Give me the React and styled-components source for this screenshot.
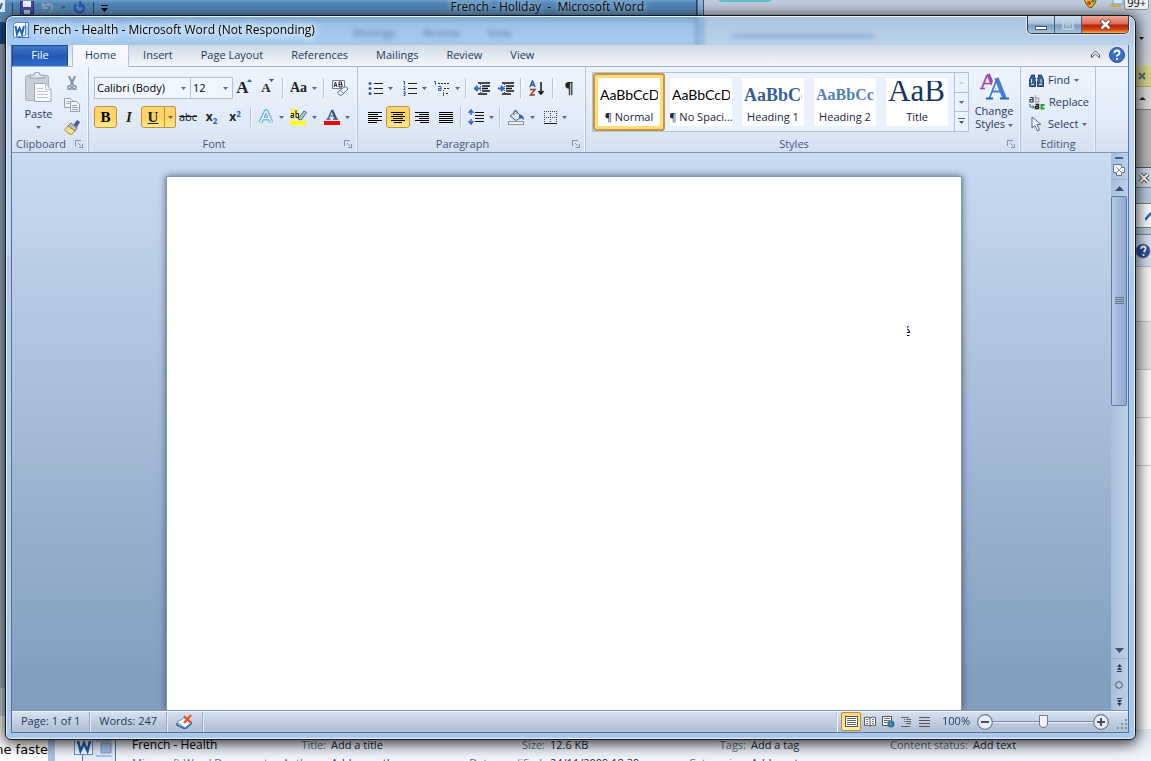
import React from 'react';
import styled, { createGlobalStyle, css } from 'styled-components';

const Global = createGlobalStyle`
  * { box-sizing: border-box; }
  html, body, #root { height: 100%; }
  body { margin: 0; overflow: hidden; background: #f4f6fa; }
  body, button, select, input { font: 11px/16px "Open Sans", "Noto Sans", sans-serif; color: #1e395b; }
  button, select { margin: 0; padding: 0; border: 0; background: none; }
`;

const Desktop = styled.div`position: relative; height: 100vh; overflow: hidden; background: #f7f8fb;`;

/* ---------- windows at the back ---------- */
const HolidayWindow = styled.section`
  position: absolute; left: 0; top: 0; bottom: 0; width: 697px;
  background: #a2b2c8; border-right: 1px solid #35485e;
`;
const HolidayBar = styled.header`
  height: 22px; display: flex; align-items: flex-start; overflow: hidden;
  background: linear-gradient(#6f9dc7, #4f86ba 4px, #5c90c0 11px, #6f9dc7 22px);
`;
const QuickTools = styled.div`display: flex; align-items: center; height: 15px; gap: 7px;`;
const QuickLine = styled.span`width: 1px; height: 12px; background: #2f4c6c;`;
const HolidayTitle = styled.span`
  margin-left: auto; padding: 0 8px; margin-right: 44px; font-size: 12px; line-height: 14px; color: #0a0a0a; white-space: pre;
  text-shadow: 0 0 6px #b9d6ef, 0 0 6px #b9d6ef;
`;
const HolidayTabs = styled.div`
  height: 22px; display: flex; align-items: center; gap: 28px; padding-left: 353px;
  background: linear-gradient(90deg, #1b4f96 5px, #9cc4ee 5px); color: #14243c;
`;
const BrowserWindow = styled.section`
  position: absolute; left: 697px; right: 0; top: 0; bottom: 32px; border-left: 1px solid #4c6a8c;
  background: linear-gradient(90deg, #8cb8e4 5px, #44566b 5px 6px, #c2cede 6px); display: flex; justify-content: flex-end;
`;
const BrowserTab = styled.span`
  position: absolute; left: 20px; top: -8px; width: 54px; height: 10px; border-radius: 4px; background: #62bdd0;
`;
const SearchSmudge = styled.span`position: absolute; left: 34px; top: 34px; width: 142px; height: 5px; background: #7f9fc4;`;
const TrayIcons = styled.div`position: absolute; right: 2px; top: -5px; display: flex; align-items: flex-start; gap: 12px;`;
const Badge = styled.span`
  margin-left: -12px; padding: 0 2px; border: 1px solid #8d949e; border-radius: 3px; background: #f0f2f5; color: #000; font-size: 11px; line-height: 13px;
`;
const BrowserEdge = styled.div`
  width: 16px; padding-top: 34px; display: flex; flex-direction: column; background: linear-gradient(#c2cede 20px, #cfd2d8 70px, #f8f8f8 180px);
`;
const EdgeCell = styled.div`
  height: ${p => p.$h}px; display: flex; align-items: center; justify-content: flex-end; overflow: hidden;
  background: ${p => p.$bg || 'transparent'}; border: 0 solid ${p => p.$line || '#7b828c'}; border-bottom-width: 1px; flex: none;
`;
const NotesWindow = styled.section`
  position: absolute; left: 0; bottom: 0; width: 48px; height: 73px; overflow: hidden; padding-top: 53px;
  background: linear-gradient(#c8d4e4 28px, #fff 28px); font: 13px/18px "DejaVu Sans", sans-serif; color: #000; white-space: nowrap; direction: rtl;
`;
const DetailsPane = styled.section`
  position: absolute; left: 48px; right: 0; bottom: 0; height: 32px; display: flex; padding-top: 7px;
  border-left: 7px solid #a9c2df; background: linear-gradient(#dfe7f2, #f1f5fc); overflow: hidden; white-space: nowrap;
`;
const DetailsIcon = styled.div`width: 77px; padding-left: 19px; flex: none;`;
const DetailsGrid = styled.dl`
  margin: 0; display: grid; grid-template-columns: 140px 49px 132px 77px 130px 61px 130px 82px 1fr; column-gap: 5px; grid-auto-rows: 18px; line-height: 18px;
`;
const Key = styled.dt`color: #5b6b82; text-align: right;`;
const Val = styled.dd`margin: 0; color: #16243c;`;
const FileKind = styled.span`color: #5b6b82;`;
const FileName = styled.span`color: #000; font-size: 12px;`;

/* ---------- main window ---------- */
const Frame = styled.main`
  position: absolute; left: 5px; top: 15px; right: 15px; bottom: 21px; display: flex; flex-direction: column;
  padding: 0 6px 6px 5px; border: 1px solid #14181e; border-radius: 8px 8px 6px 6px; overflow: hidden;
  background: linear-gradient(rgba(150,185,220,.5), rgba(178,212,250,.5) 29px, #bcd6f2 30px, #bcd6f2 240px, #a9cdf6 241px, #a8c8ec);
  backdrop-filter: blur(2px); box-shadow: inset 0 0 0 1px #e6f2fd;
`;
const FrameShadow = styled.div`
  position: absolute; left: 5px; top: 15px; right: 15px; bottom: 21px; border-radius: 8px; box-shadow: 0 2px 14px 2px rgba(0,0,0,.75);
`;
const TitleBar = styled.header`height: 29px; flex: none; display: flex; align-items: flex-start; padding-left: 2px;`;
const WindowTitle = styled.h1`
  margin: 5px 0 0 4px; font-size: 12px; line-height: 17px; font-weight: 400; color: #000; white-space: nowrap;
  text-shadow: 0 0 8px #fff, 0 0 8px #fff, 0 0 10px #fff;
`;
const TitleIcon = styled.span`margin-top: 6px; height: 17px;`;
const Controls = styled.div`
  display: flex; margin-left: auto; height: 18px; border: 1px solid #2c3a4c; border-top: 0; border-radius: 0 0 5px 5px; overflow: hidden;
  box-shadow: 0 0 0 1px rgba(255,255,255,.6);
`;
const ControlButton = styled.button`
  width: ${p => (p.$close ? 46 : 27)}px; display: flex; align-items: center; justify-content: center;
  border-right: ${p => (p.$close ? 0 : '1px solid #4c6079')};
  background: ${p => p.$close
    ? 'linear-gradient(#f0a898, #d9705c 8px, #b81e08 9px, #d84a18 14px, #f8b850)'
    : 'linear-gradient(#cfdfee, #a9c1d9 8px, #7d9ab9 9px, #a8c4e2)'};
`;
const Client = styled.div`flex: 1; min-height: 0; display: flex; flex-direction: column; border: 1px solid #5c7290; border-top: 0;`;

const TabStrip = styled.nav`
  height: 22px; flex: none; display: flex; border-bottom: 1px solid #9db2cb; background: linear-gradient(#cfdae6, #f3f6fa);
`;
const tabBase = css`height: 21px; padding: 0 14px 2px; white-space: nowrap;`;
const FileTab = styled.button`
  ${tabBase} width: 56px; margin-right: 4px; color: #fff; border: 1px solid #1d4a9c; border-bottom: 0;
  background: linear-gradient(#4078c8, #2258b4 50%, #2f6fd0);
`;
const Tab = styled.button`
  ${tabBase}
  ${p => p.$active && css`height: 22px; padding: 0 12px 3px; border: 1px solid #b3c4d9; border-width: 0 1px; background: linear-gradient(#f6f9fc, #f0f5fc);`}
`;
const HelpTools = styled.div`margin-left: auto; display: flex; align-items: center; gap: 8px; padding: 0 3px 2px 0;`;
const BareButton = styled.button`display: flex; align-items: center; justify-content: center;`;

const Ribbon = styled.div`
  height: 86px; flex: none; display: flex; background: linear-gradient(#edf4fd, #dfe9f6 60px, #d3e0f0); border-bottom: 1px solid #8395b3;
`;
const Group = styled.section`
  width: ${p => p.$w}px; flex: none; display: flex; flex-direction: column; border-right: 1px solid #aebfd8; box-shadow: inset -1px 0 #f2f7fd;
`;
const GroupBody = styled.div`flex: 1; min-height: 0; padding: ${p => p.$pad || '10px 5px 0'}; display: flex; flex-direction: ${p => (p.$row ? 'row' : 'column')}; gap: ${p => p.$gap || 0}px;`;
const GroupLabel = styled.footer`height: 17px; display: flex; align-items: center; color: #41597b;`;
const GroupName = styled.span`flex: 1; text-align: center;`;
const Launcher = styled.button`width: 18px; height: 16px; display: flex; align-items: center; justify-content: center;`;
const Row = styled.div`display: flex; align-items: center; height: 22px;`;
const Tool = styled.button`
  width: ${p => p.$w || 23}px; height: 22px; flex: none; display: flex; align-items: center; justify-content: center; gap: 5px;
  ${p => p.$on && css`border: 1px solid #c2923a; border-radius: 3px; background: linear-gradient(#fbd577, #fdd25e 50%, #fee88f);`}
  ${p => p.$joinRight && css`border-radius: 3px 0 0 3px;`}
  ${p => p.$joinLeft && css`border-radius: 0 3px 3px 0; border-left: 0;`}
`;
const Sep = styled.span`width: 8px; height: 20px; flex: none; background: linear-gradient(90deg, transparent 3px, #b3c3da 3px 4px, #f7fafd 4px 5px, transparent 5px);`;
const Combo = styled.label`
  position: relative; width: ${p => p.$w}px; height: 22px; display: block; border: 1px solid #b1c0d6; margin-right: -1px; background: #eff6fe;
  svg { position: absolute; right: 4px; top: 9px; pointer-events: none; }
`;
const ComboSelect = styled.select`appearance: none; width: 100%; height: 20px; padding-left: 2px; color: #000; outline: 0;`;
const Glyph = styled.span`
  font-family: "Liberation Serif", serif; font-weight: ${p => p.$weight || 700}; font-size: ${p => p.$size || 16}px; line-height: 18px;
  color: ${p => p.$color || '#222'}; font-style: ${p => p.$slant || 'normal'}; text-decoration: ${p => p.$line || 'none'};
`;
const Strike = styled.s`font-size: 11px; line-height: 16px; color: #222;`;
const Script = styled.span`
  display: flex; align-items: ${p => (p.$up ? 'flex-start' : 'flex-end')}; font-weight: 700; font-size: 12px; line-height: 14px; color: #222;
  small { font-size: 8px; line-height: ${p => (p.$up ? 8 : 7)}px; color: #2b58b8; }
`;
const Resize = styled.span`display: flex; align-items: flex-start; svg { margin-left: -2px; }`;
const PasteButton = styled.button`width: 44px; display: flex; flex-direction: column; align-items: center; white-space: nowrap; svg + span { margin: 3px 0 4px; }`;
const Stack = styled.div`display: flex; flex-direction: column;`;

const Gallery = styled.div`display: flex; flex: 1; height: 60px; border: 1px solid #b1c2dc; background: #eaf3fd; overflow: hidden;`;
const StyleTile = styled.button`
  width: 72px; height: 58px; flex: none; padding: 2px; border: 2px solid transparent; border-radius: 3px;
  ${p => p.$on && css`border-color: #c8963c; background: #fddc7c;`}
`;
const TileInner = styled.span`
  display: flex; flex-direction: column; align-items: center; height: 48px; margin: 1px; background: #fff; overflow: hidden; white-space: nowrap; color: #16243c;
`;
const Sample = styled.span`
  align-self: stretch; height: 28px; margin: 3px 2px 0; overflow: hidden; text-align: left;
  font-family: ${p => p.$serif ? '"Liberation Serif", serif' : 'Lato, sans-serif'}; font-size: ${p => p.$size}px; line-height: ${p => (p.$tall ? 20 : 28)}px;
  font-weight: ${p => p.$weight || 400}; color: ${p => p.$color || '#000'};
`;
const GalleryScroll = styled.div`width: 14px; margin-left: auto; display: flex; flex-direction: column; border-left: 1px solid #b1c2dc;`;
const ScrollCell = styled.button`flex: 1; display: flex; align-items: center; justify-content: center; border-bottom: 1px solid #b1c2dc; &:last-child { border-bottom: 0; }`;
const ChangeStyles = styled.button`
  width: 50px; flex: none; display: flex; flex-direction: column; align-items: center; line-height: 13px; gap: 4px;
  span { white-space: nowrap; } svg { vertical-align: middle; }
`;
const EditButton = styled.button`height: 22px; display: flex; align-items: center; gap: 4px; white-space: nowrap;`;

const Workspace = styled.div`flex: 1; min-height: 0; display: flex; background: linear-gradient(#c9dbf1, #a4bad6 50%, #829ebf 95%);`;
const Canvas = styled.div`flex: 1; min-width: 0; display: flex; justify-content: center; padding: 23px 12px 0 16px; overflow: hidden;`;
const Paper = styled.article`
  flex: 0 1 796px; padding: 147px 50px 0; background: #fff; border: 1px solid #8595a9; border-bottom: 0; box-shadow: 0 0 7px rgba(30,50,80,.7); text-align: right;
`;
const Stray = styled.p`margin: 0 0 0 auto; width: 4px; overflow: hidden; direction: rtl; color: #000; font-size: 12px; line-height: 16px;`;
const ScrollBar = styled.div`width: 17px; flex: none; display: flex; flex-direction: column; align-items: stretch; background: linear-gradient(90deg, #a7bfdc, #bdd0e8); padding: 2px 1px 0 0;`;
const ScrollButton = styled.button`height: ${p => p.$h}px; flex: none; display: flex; align-items: center; justify-content: center; border-bottom: ${p => (p.$line ? '1px solid #9ab0cb' : 0)};`;
const SplitHandle = styled.span`height: 3px; margin: 2px 4px 0; border-top: 2px solid #44608c;`;
const Track = styled.div`flex: 1; min-height: 0;`;
const Thumb = styled.div`
  height: 47%; border: 1px solid #5f7ba2; border-radius: 2px; background: linear-gradient(90deg, #b7cbe5, #a3badb 40%, #8ea9ce);
  display: flex; align-items: center; justify-content: center;
`;

const StatusBar = styled.footer`
  height: 22px; flex: none; display: flex; align-items: center; border-top: 1px solid #7d96b8; box-shadow: inset 0 1px #f4f8fd;
  background: linear-gradient(#d9e4f1, #bccbde 60%, #aebfd5);
`;
const StatusItem = styled.span`height: 20px; padding: 0 9px 1px; display: flex; align-items: center; border-right: 1px solid #93a7c1; box-shadow: 1px 0 #e8eff7; white-space: nowrap;`;
const StatusRight = styled.div`margin-left: auto; display: flex; align-items: center; height: 20px;`;
const ViewButton = styled.button`
  width: ${p => (p.$on ? 20 : 18)}px; height: 19px; display: flex; align-items: center; justify-content: center;
  ${p => p.$on && css`border: 1px solid #c08a34; border-radius: 2px; background: linear-gradient(#fbd778, #fff19a);`}
`;
const ZoomLevel = styled.button`padding: 0 7px 1px 9px; white-space: nowrap;`;
const ZoomRange = styled.input`
  appearance: none; width: 100px; height: 16px; margin: 0; background: linear-gradient(transparent 7px, #6f86a3 7px 8px, #eef4fb 8px 9px, transparent 9px);
  &::-webkit-slider-thumb { appearance: none; width: 9px; height: 13px; border: 1px solid #6b7c92; border-radius: 1px 1px 5px 5px; background: #eef2f7; }
`;

const Svg = ({ w, h, children, ...rest }) => (
  <svg width={w} height={h} viewBox={`0 0 ${w} ${h}`} fill="none" aria-hidden="true" {...rest}>{children}</svg>
);
const Caret = ({ color = '#5a6a80', up }) => (
  <Svg w={5} h={3}><path d={up ? 'M0 3h5L2.500 0z' : 'M0 0h5L2.500 3z'} fill={color} /></Svg>
);
const BigCaret = ({ up }) => <Svg w={9} h={5}><path d={up ? 'M0 5h9L4.500 0z' : 'M0 0h9L4.500 5z'} fill="#3c4f7c" /></Svg>;
const LaunchIcon = () => (
  <Svg w={8} h={8} shapeRendering="crispEdges"><path d="M.5 6V.5H6" stroke="#8292a8" /><path d="M3 3l3 3M4 7.500h3.500V4" stroke="#8292a8" /></Svg>
);
const WordIcon = () => (
  <Svg w={16} h={17}>
    <rect x="4" y=".5" width="11.500" height="15" fill="#eef5fd" stroke="#3f74b8" />
    <path d="M12 4h3M12 6h3M12 8h3M12 10h3M12 12h3" stroke="#7ba3d6" />
    <path d="M.5 2.500 3 .5H12.500v13L.5 15.500z" fill="#fff" stroke="#5b86bd" />
    <path d="m2.500 4 1.500 8L6.500 6 9 12l2-8" stroke="#1f62b5" strokeWidth="2" />
  </Svg>
);
const LINE_SETS = {
  left: [[0, 14], [0, 10], [0, 14], [0, 10], [0, 14], [0, 9]],
  center: [[0, 14], [2, 10], [0, 14], [2, 10], [0, 14], [3, 8]],
  right: [[0, 14], [4, 10], [0, 14], [4, 10], [0, 14], [5, 9]],
  full: [[0, 14], [0, 14], [0, 14], [0, 14], [0, 14], [0, 14]],
};
const AlignIcon = ({ kind }) => (
  <Svg w={14} h={11} shapeRendering="crispEdges">{LINE_SETS[kind].map(([x, w], i) => <rect key={i} x={x} y={i * 2} width={w} height="1" fill="#000" />)}</Svg>
);
const ListIcon = ({ kind }) => (
  <Svg w={15} h={15}>
    <path d="M6 2.500h9M6 7.500h9M6 12.500h9" stroke="#222" shapeRendering="crispEdges" />
    {kind === 'bullets'
      ? <g fill="#2f5aae"><circle cx="2" cy="2.500" r="1.500" /><circle cx="2" cy="7.500" r="1.500" /><circle cx="2" cy="12.500" r="1.500" /></g>
      : <path d="M1 .5h1.500V4M1.500 5.500h1.500v1.500L1.500 8.500H3.500M1.500 10.500H3v4H1.500M1.500 12.500H3" stroke="#2f5aae" />}
  </Svg>
);
const MultiIcon = () => (
  <Svg w={17} h={15}>
    <path d="M5 2.500h11M11 7.500h5M13 12.500h3" stroke="#222" strokeDasharray="2 1" />
    <path d="M1 .5h1.500V4M5 5.500h3v4H5.500V7.500H8M10.500 11v4M10.500 9v1" stroke="#2f5aae" />
  </Svg>
);
const IndentIcon = ({ inward }) => (
  <Svg w={16} h={13}>
    <path d="M4 1h12M8 4h8M8 6.500h6M8 9h8M4 12h9" stroke="#111" strokeWidth="1.500" />
    <path d="M6.500 0v13" stroke="#555" strokeDasharray="1 1" />
    <path d={inward ? 'M0 6.500h5M3 4l2.500 2.500L3 9' : 'M7 6.500H1M3.500 4 1 6.500 3.500 9'} stroke="#2f66c4" strokeWidth="2" />
  </Svg>
);
const SortIcon = () => (
  <Svg w={16} h={16}>
    <path d="M1 7 3.500 1 6 7M2 5h3" stroke="#2d56a8" strokeWidth="1.500" />
    <path d="M1 9.500h5L1.500 15H6" stroke="#a03434" strokeWidth="1.500" />
    <path d="M12 2v11M9.500 11l2.500 3 2.500-3" stroke="#111" strokeWidth="1.500" />
  </Svg>
);
const SpacingIcon = () => (
  <Svg w={16} h={16}>
    <path d="M7 3.500h9M7 6.500h9M7 9.500h9M7 12.500h9" stroke="#111" />
    <path d="M3 1v5M3 10v5M.5 4 3 1l2.500 3M.5 12 3 15l2.500-3" stroke="#2f66c4" strokeWidth="1.500" />
  </Svg>
);
const BucketIcon = () => (
  <Svg w={17} h={16}>
    <path d="m2 7 6-5 6 6-6 3.500z" fill="#dfe8f3" stroke="#56687f" />
    <path d="M6 6V2q1.500-2 3 0v3" stroke="#56687f" /><path d="M11 5q5 1 5 6-2-2-5-2z" fill="#2f66c4" />
    <rect x=".5" y="12.500" width="15" height="3" fill="#f3f3f3" stroke="#8a93a0" />
  </Svg>
);
const BordersIcon = () => (
  <Svg w={13} h={13} shapeRendering="crispEdges"><path d="M0 .5h13M0 6.500h13M.5 0v13M6.500 0v13M12.500 0v13" stroke="#444" strokeDasharray="1 1" /><path d="M0 12.500h13" stroke="#222" /></Svg>
);
const PasteIcon = () => (
  <Svg w={27} h={31}>
    <rect x=".5" y="3.500" width="23" height="25" rx="1.500" fill="#c8cfd9" stroke="#aab3c1" />
    <path d="M5 6V3h4q0-3 3-3t3 3h4v3z" fill="#e4e7ec" stroke="#929dad" />
    <path d="M9.500 11.500h11l5.500 6v12H9.500z" fill="#fafbfd" stroke="#9ba8bb" />
    <path d="M20.500 11.500v6H26M12 16.500h6M12 19.500h11M12 22.500h11M12 25.500h11" stroke="#bac4d2" />
  </Svg>
);
const CutIcon = () => (
  <Svg w={12} h={15}><path d="m3 0 4 9M9 0 5 9" stroke="#8492a8" strokeWidth="2" /><circle cx="3.500" cy="11.500" r="1.800" stroke="#8492a8" strokeWidth="1.500" /><circle cx="8.500" cy="11.500" r="1.800" stroke="#8492a8" strokeWidth="1.500" /></Svg>
);
const CopyIcon = () => (
  <Svg w={16} h={14}>
    <path d="M.5.500h6l2 2v7h-8z" fill="#f5f7fa" stroke="#8f9db1" /><path d="M2 3.500h4M2 5.500h4" stroke="#aab6c6" />
    <path d="M6.500 3.500h6l3 3v7h-9z" fill="#f5f7fa" stroke="#8f9db1" /><path d="M8 7.500h5M8 9.500h6M8 11.500h6" stroke="#8f9db1" />
  </Svg>
);
const BrushIcon = () => (
  <Svg w={16} h={15}>
    <path d="m10 5 3-4.500 2.500 1.500L12.500 7z" fill="#5560b0" stroke="#343c80" strokeWidth=".8" />
    <path d="m7 3 6 5-2 3-7-5z" fill="#b9bec8" stroke="#5e6774" strokeWidth=".8" />
    <path d="m4 6 7 5-3.500 3.500-3-1L.5 10z" fill="#f3dc8a" stroke="#a2792c" strokeWidth=".8" />
  </Svg>
);
const EraserIcon = () => (
  <Svg w={17} h={17}>
    <path d="M.5.500h12v8H.5z" fill="#f8fafd" stroke="#6b7c96" />
    <path d="m2 7 1.500-5L5 7M2.500 5.500h2M7 2v5h3V4.500H7M7 2h2.500v2" stroke="#222" />
    <path d="m6 12 6-5q3-1 4 2l-6 6q-4 1-4-3z" fill="#eef3fa" stroke="#62748f" /><path d="m8 10 4 4" stroke="#62748f" />
  </Svg>
);
const MarkerIcon = () => (
  <Svg w={17} h={16}>
    <rect width="9" height="10" fill="#f4ee6a" /><path d="M1 4.500h2.500V8.500h-2.500V6.500h2.500M6 1v7.500h2.500V4.500H6" stroke="#222" />
    <path d="m8 10 6-8 2.500 1.500L11 11z" fill="#b8c9e2" stroke="#48607f" /><rect y="12" width="16" height="4" fill="#ff0" />
  </Svg>
);
const FontColorIcon = () => (
  <Svg w={16} h={16}><path d="m4 10 4-9" stroke="#34588f" strokeWidth="1.200" /><path d="m8 1 4 9" stroke="#34588f" strokeWidth="2.500" /><path d="M5 7h6M2.500 10.200h4M9 10.200h5" stroke="#34588f" strokeWidth="1.200" /><rect y="12" width="16" height="4" fill="red" /></Svg>
);
const GlowIcon = () => (
  <Svg w={16} h={16}>
    <path d="m2.500 13.500 5-11h1l5 11M5 9.500h6" stroke="#9bd8f5" strokeWidth="5" strokeLinejoin="round" />
    <path d="m2.500 13.500 5-11h1l5 11M5 9.500h6" stroke="#5aa2cf" strokeWidth="3" /><path d="m2.500 13.500 5-11h1l5 11M5 9.500h6" stroke="#f3faff" strokeWidth="1.500" />
  </Svg>
);
const ChangeStylesIcon = () => (
  <Svg w={29} h={28}>
    <path d="m2 16 5-13" stroke="#a843a8" strokeWidth="1.800" /><path d="m8 2 6 14" stroke="#a843a8" strokeWidth="3.500" /><path d="M4 11.500h7M0 16.500h5M11 16.500h5" stroke="#a843a8" strokeWidth="1.500" />
    <path d="m9 26 8-20 8 20" stroke="#fff" strokeWidth="5" /><path d="m9.500 26 7-18" stroke="#4480cf" strokeWidth="2" /><path d="m16.500 6 8 20" stroke="#4480cf" strokeWidth="4.500" /><path d="M12 19.500h9" stroke="#4480cf" strokeWidth="2" /><path d="M6 26.500h7M20 26.500h9" stroke="#2d62ae" strokeWidth="2" />
  </Svg>
);
const BinocularsIcon = () => (
  <Svg w={15} h={13}>
    <path d="M2.500 1h3v3h1v8.500h-6V6zM9.500 1h3l2 5v6.500h-6V4h1z" fill="#3c5f9a" stroke="#26426f" /><path d="M6 6h3M2.500 5v4M12 5v4M2 10.500h3M10 10.500h3" stroke="#d0e0f5" />
  </Svg>
);
const ReplaceIcon = () => (
  <Svg w={16} h={15}>
    <path d="M1 2.500h3v4.500H1V4.500h3" stroke="#333" strokeWidth="1.200" /><path d="M6.500 0v7h3V3h-3" stroke="#aab0ba" strokeWidth="1.500" />
    <path d="M1 9v3h4M3.500 10.500 5 12l-1.500 1.500" stroke="#2d5bb0" /><path d="M6.500 9.500h3v4h-3v-2h3" stroke="#222" strokeWidth="1.500" />
    <path d="M15.500 10h-3v3.500h3" stroke="#27a327" strokeWidth="2" />
  </Svg>
);
const PointerIcon = () => <Svg w={15} h={16}><path d="M3 1v11l3-2.500L8.500 15l2-1L8 8.500h4z" fill="#fff" stroke="#54657e" /></Svg>;
const ProofIcon = () => (
  <Svg w={17} h={15}>
    <path d="m1 8 7-4 8 4-7 6z" fill="#fff" stroke="#7d8ea9" /><path d="m1 9v2l8 4 7-6" stroke="#3560ae" strokeWidth="1.500" /><path d="m8 2 7 7M15 1 8 9" stroke="#f0502c" strokeWidth="2.200" />
  </Svg>
);
const PrintViewIcon = () => <Svg w={13} h={11}><rect x=".5" y=".5" width="12" height="10" fill="#fff" stroke="#555" /><path d="M2 2.500h9M2 4.500h9M2 6.500h9M2 8.500h9" stroke="#666" /></Svg>;
const ReadIcon = () => <Svg w={12} h={11}><path d="M.5 1.500q3-1 5.500.500 2.500-1.500 5.500-.500v8q-3-1-5.500.500-2.500-1.500-5.500-.500zM6 2v8" fill="#fff" stroke="#555" /><path d="M2 3.500h2.500M2 5.500h2.500M2 7.500h2.500M8 3.500h2M8 5.500h2M8 7.500h2" stroke="#777" /></Svg>;
const WebIcon = () => <Svg w={13} h={12}><rect x=".5" y=".5" width="9" height="9" fill="#fff" stroke="#555" /><path d="M2 2.500h6M2 4.500h6M2 6.500h4" stroke="#666" /><circle cx="9" cy="8" r="3.500" fill="#2d6fa8" /><path d="m7 8 2-2 1 2-1 2z" fill="#4caf50" /></Svg>;
const OutlineIcon = () => <Svg w={10} h={10} shapeRendering="crispEdges"><path d="M0 .5h8M3 2.500h1M5 2.500h5M3 4.500h1M5 4.500h5M5 6.500h5M0 9.500h9" stroke="#666" /></Svg>;
const DraftIcon = () => <Svg w={11} h={10} shapeRendering="crispEdges"><path d="M0 .5h11M0 3.500h11M0 6.500h11M0 9.500h11" stroke="#555" /></Svg>;
const RoundIcon = ({ plus }) => (
  <Svg w={16} h={16}><circle cx="8" cy="8" r="7.300" fill="#e8eef6" stroke="#6b7c92" strokeWidth="1.200" /><path d={plus ? 'M4 8h8M8 4v8' : 'M4 8h8'} stroke="#4a4f58" strokeWidth="2" /></Svg>
);
const HelpIcon = () => (
  <Svg w={16} h={16}><circle cx="8" cy="8" r="7.500" fill="#3e70c6" stroke="#27509a" /><path d="M5.500 6q0-2.500 2.500-2.500T10.500 6q0 1.300-1.500 2T8 9.500M8 11v2" stroke="#fff" strokeWidth="1.800" /></Svg>
);
const GripIcon = () => <Svg w={11} h={11} shapeRendering="crispEdges"><path d="M8 0h2v2H8zM4 4h2v2H4zM8 4h2v2H8zM0 8h2v2H0zM4 8h2v2H4zM8 8h2v2H8z" fill="#8197b4" /></Svg>;
const JumpIcon = ({ down }) => <Svg w={5} h={8}><g transform={down ? 'rotate(180 2.5 4)' : undefined}><path d="M2.500 0 0 3h5zM2.500 3 0 6h5zM0 7h5v1H0z" fill="#333f52" /></g></Svg>;

const TABS = ['Home', 'Insert', 'Page Layout', 'References', 'Mailings', 'Review', 'View'];
const STYLES = [
  { name: '¶ Normal', text: 'AaBbCcDc', size: 14, on: true },
  { name: '¶ No Spaci...', text: 'AaBbCcDc', size: 14 },
  { name: 'Heading 1', text: 'AaBbCc', size: 18, weight: 700, color: '#365f91', serif: true },
  { name: 'Heading 2', text: 'AaBbCc', size: 16, weight: 700, color: '#4f81bd', serif: true },
  { name: 'Title', text: 'AaB', size: 31, color: '#17365d', serif: true, tall: true },
];

const RibbonGroup = ({ name, w, children, launcher = true, ...body }) => (
  <Group $w={w} aria-label={name}>
    <GroupBody {...body}>{children}</GroupBody>
    <GroupLabel><GroupName>{name}</GroupName>{launcher && <Launcher aria-label={`${name} options`}><LaunchIcon /></Launcher>}</GroupLabel>
  </Group>
);

const BackWindows = () => (
  <>
    <HolidayWindow>
      <HolidayBar>
        <QuickTools>
          <Svg w={5} h={15}><rect width="5" height="12" fill="#e6f0fb" /><path d="m0 9 2-6" stroke="#2565b8" strokeWidth="2" /></Svg>
          <QuickLine />
          <Svg w={14} h={14}><path d="M.5 0h13v13h-13z" fill="#4950a8" stroke="#2c2f74" /><path d="M3 0h8v6H3z" fill="#f2f4fa" /><path d="M4 9h6v4H4z" fill="#c5cae4" /></Svg>
          <Svg w={13} h={12}><path d="M2 1v5h5M2 5q5-5 9-1 1 4-3 7" stroke="#8ea3bb" strokeWidth="2" /></Svg>
          <Caret color="#3f5b7c" />
          <Svg w={13} h={13}><path d="M3 3q-3 5 1 8 5 2 7-3 0-4-4-6M7 0v5h4" stroke="#2c5cc0" strokeWidth="2.500" /></Svg>
          <QuickLine />
          <Svg w={7} h={8}><path d="M0 1.500h7" stroke="#000" /><path d="M0 4h7L3.500 8z" fill="#000" /></Svg>
        </QuickTools>
        <HolidayTitle>{'French - Holiday  -  Microsoft Word'}</HolidayTitle>
      </HolidayBar>
      <HolidayTabs><span>Mailings</span><span>Review</span><span>View</span></HolidayTabs>
    </HolidayWindow>
    <BrowserWindow>
      <BrowserTab /><SearchSmudge />
      <TrayIcons>
        <Svg w={14} h={13}><path d="M1 2h12q1 6-5 11Q2 11 1 2z" fill="#e7b928" stroke="#7b5320" /><circle cx="6" cy="8" r="2" fill="#d33c24" /><circle cx="10" cy="6" r="1.500" fill="#2f8f3e" /></Svg>
        <Svg w={15} h={12}><path d="M4 0h10v9H4z" fill="#d5ecfb" stroke="#57a6dc" /><path d="M1 9q4 4 11 1" stroke="#eab13c" strokeWidth="2" /></Svg>
        <Badge>99+</Badge>
      </TrayIcons>
      <BrowserEdge>
        <EdgeCell $h={9} $line="transparent"><Svg w={13} h={5}><path d="M1 1h5L3.500 4z" fill="#111" /></Svg></EdgeCell>
        <EdgeCell $h={22} $line="transparent" />
        <EdgeCell $h={22} $bg="#d6d28c" $line="#b5ae3d"><Svg w={14} h={12}><path d="m2 3 6 6M8 3 2 9" stroke="#5b6a80" strokeWidth="2" /></Svg></EdgeCell>
        <EdgeCell $h={23} $bg="#d8d8d8"><Svg w={13} h={5}><path d="M1 4h7L4.500 1z" fill="#222" /></Svg></EdgeCell>
        <EdgeCell $h={58} $bg="#b5b5b5" $line="#555" />
        <EdgeCell $h={20} $bg="#ccd6e3"><Svg w={14} h={13}><path d="m3 3 8 8M11 3l-8 8" stroke="#555" strokeWidth="4" /><path d="m3 3 8 8M11 3l-8 8" stroke="#fff" strokeWidth="2" /></Svg></EdgeCell>
        <EdgeCell $h={16} $bg="#b8c9dc" />
        <EdgeCell $h={24} $bg="#f6f9fc"><Svg w={6} h={14}><path d="M0 11 6 4" stroke="#2c66b5" strokeWidth="2.500" /></Svg></EdgeCell>
        <EdgeCell $h={7} $bg="#b8cbd7" />
        <EdgeCell $h={32} $bg="#d3dfee" $line="#a9b9d4"><Svg w={15} h={16}><circle cx="7" cy="8" r="7" fill="#2a4f9e" stroke="#777" /><path d="M5 6q0-2.500 2.500-2.500T9.500 6q0 1.500-2 3M7.500 11v2" stroke="#fff" strokeWidth="1.800" /></Svg></EdgeCell>
        <EdgeCell $h={55} $bg="#f2f2f2" $line="#c4c4c4" />
        <EdgeCell $h={48} $bg="#e2e2e2" $line="#c4c4c4" />
        <EdgeCell $h={48} $bg="#f6f6f6" $line="#c4c4c4" />
        <EdgeCell $h={48} $bg="#fafafa" $line="#c4c4c4" />
      </BrowserEdge>
    </BrowserWindow>
    <NotesWindow>ne faste</NotesWindow>
    <DetailsPane>
      <DetailsIcon>
        <Svg w={43} h={28}>
          <rect x="8.500" y=".5" width="33" height="30" fill="#e3edf9" stroke="#56779f" /><path d="M27 7h10v10H27zM22 5h16M22 20h16" stroke="#7b9cc9" fill="#a9c3e4" />
          <rect x=".5" y="1.500" width="18" height="17" fill="#f6faff" stroke="#6a90c0" /><path d="m4 5 2.500 10L10 7l3.500 8L16 5" stroke="#1d5fb2" strokeWidth="2.500" />
        </Svg>
      </DetailsIcon>
      <DetailsGrid>
        <FileName>French - Health</FileName><Key>Title:</Key><Val>Add a title</Val><Key>Size:</Key><Val>12.6 KB</Val><Key>Tags:</Key><Val>Add a tag</Val><Key>Content status:</Key><Val>Add text</Val>
        <FileKind>Microsoft Word Document</FileKind><Key>Authors:</Key><Val>Add an author</Val><Key>Date modified:</Key><Val>24/11/2009 18:39</Val><Key>Categories:</Key><Val>Add a category</Val>
      </DetailsGrid>
    </DetailsPane>
  </>
);

export default function App() {
  return (
    <Desktop>
      <Global />
      <BackWindows />
      <FrameShadow />
      <Frame>
        <TitleBar>
          <TitleIcon><WordIcon /></TitleIcon>
          <WindowTitle>French - Health - Microsoft Word (Not Responding)</WindowTitle>
          <Controls>
            <ControlButton aria-label="Minimise"><Svg w={12} h={12}><rect x=".5" y="7.500" width="11" height="3" fill="#fff" stroke="#46566b" /></Svg></ControlButton>
            <ControlButton aria-label="Maximise" disabled><Svg w={12} h={10}><rect x="1" y="1" width="10" height="8" stroke="#c3d2e2" strokeWidth="1.500" /><rect x="4" y="4" width="4" height="2" stroke="#c3d2e2" /></Svg></ControlButton>
            <ControlButton $close aria-label="Close"><Svg w={13} h={11}><path d="m2 1 9 9M11 1l-9 9" stroke="#5a3030" strokeWidth="4" /><path d="m2.500 1.500 8 8M10.500 1.500l-8 8" stroke="#fff" strokeWidth="2.500" /></Svg></ControlButton>
          </Controls>
        </TitleBar>
        <Client>
          <TabStrip>
            <FileTab>File</FileTab>
            {TABS.map((t, i) => <Tab key={t} $active={i === 0}>{t}</Tab>)}
            <HelpTools>
              <BareButton aria-label="Minimise the ribbon"><Svg w={11} h={9}><path d="m1.500 5 4-4 4 4v2.500L5.500 4 1.500 7.500z" fill="#fff" stroke="#4b5563" /></Svg></BareButton>
              <BareButton aria-label="Help"><HelpIcon /></BareButton>
            </HelpTools>
          </TabStrip>
          <Ribbon>
            <RibbonGroup name="Clipboard" w={77} $row $pad="5px 5px 0 5px">
              <PasteButton><PasteIcon /><span>Paste</span><Caret /></PasteButton>
              <Stack>
                <Tool aria-label="Cut"><CutIcon /></Tool>
                <Tool aria-label="Copy"><CopyIcon /></Tool>
                <Tool aria-label="Format painter"><BrushIcon /></Tool>
              </Stack>
            </RibbonGroup>
            <RibbonGroup name="Font" w={269} $gap={7}>
              <Row>
                <Combo $w={99}><ComboSelect aria-label="Font"><option>Calibri (Body)</option></ComboSelect><Caret /></Combo>
                <Combo $w={44}><ComboSelect aria-label="Font size"><option>12</option></ComboSelect><Caret /></Combo>
                <Tool $w={24} aria-label="Grow font"><Resize><Glyph $size={17}>A</Glyph><Caret up color="#2f5aae" /></Resize></Tool>
                <Tool aria-label="Shrink font"><Resize><Glyph $size={13}>A</Glyph><Caret color="#2f5aae" /></Resize></Tool>
                <Sep />
                <Tool $w={33} aria-label="Change case"><Glyph $size={14}>Aa</Glyph><Caret /></Tool>
                <Sep />
                <Tool $w={24} aria-label="Clear formatting"><EraserIcon /></Tool>
              </Row>
              <Row>
                <Tool $on aria-label="Bold"><Glyph $color="#000" $size={15}>B</Glyph></Tool>
                <Tool $w={24} aria-label="Italic"><Glyph $slant="italic" $size={15}>I</Glyph></Tool>
                <Tool $w={24} $on $joinRight aria-label="Underline"><Glyph $line="underline" $size={15}>U</Glyph></Tool>
                <Tool $w={11} $on $joinLeft aria-label="Underline style"><Caret /></Tool>
                <Tool $w={24} aria-label="Strikethrough"><Strike>abc</Strike></Tool>
                <Tool aria-label="Subscript"><Script>x<small>2</small></Script></Tool>
                <Tool $w={24} aria-label="Superscript"><Script $up>x<small>2</small></Script></Tool>
                <Sep />
                <Tool $w={31} aria-label="Text effects"><GlowIcon /><Caret /></Tool>
                <Tool $w={34} aria-label="Highlight"><MarkerIcon /><Caret /></Tool>
                <Tool $w={34} aria-label="Font colour"><FontColorIcon /><Caret /></Tool>
              </Row>
            </RibbonGroup>
            <RibbonGroup name="Paragraph" w={228} $gap={7}>
              <Row>
                <Tool $w={34} aria-label="Bullets"><ListIcon kind="bullets" /><Caret /></Tool>
                <Tool $w={34} aria-label="Numbering"><ListIcon /><Caret /></Tool>
                <Tool $w={31} aria-label="Multilevel list"><MultiIcon /><Caret /></Tool>
                <Sep />
                <Tool $w={24} aria-label="Decrease indent"><IndentIcon /></Tool>
                <Tool aria-label="Increase indent"><IndentIcon inward /></Tool>
                <Sep />
                <Tool $w={24} aria-label="Sort"><SortIcon /></Tool>
                <Sep />
                <Tool $w={24} aria-label="Show marks"><Glyph $size={17}>¶</Glyph></Tool>
              </Row>
              <Row>
                <Tool aria-label="Align left"><AlignIcon kind="left" /></Tool>
                <Tool $w={24} $on aria-label="Centre"><AlignIcon kind="center" /></Tool>
                <Tool $w={24} aria-label="Align right"><AlignIcon kind="right" /></Tool>
                <Tool aria-label="Justify"><AlignIcon kind="full" /></Tool>
                <Sep />
                <Tool $w={31} aria-label="Line spacing"><SpacingIcon /><Caret /></Tool>
                <Sep />
                <Tool $w={34} aria-label="Shading"><BucketIcon /><Caret /></Tool>
                <Tool $w={34} aria-label="Borders"><BordersIcon /><Caret /></Tool>
              </Row>
            </RibbonGroup>
            <RibbonGroup name="Styles" w={435} $row $pad="5px 1px 0 6px">
              <Gallery>
                {STYLES.map(s => (
                  <StyleTile key={s.name} $on={s.on}>
                    <TileInner><Sample $size={s.size} $weight={s.weight} $color={s.color} $serif={s.serif} $tall={s.tall}>{s.text}</Sample>{s.name}</TileInner>
                  </StyleTile>
                ))}
                <GalleryScroll>
                  <ScrollCell aria-label="Previous styles"><Caret up color="#c3cfdf" /></ScrollCell>
                  <ScrollCell aria-label="Next styles"><Caret /></ScrollCell>
                  <ScrollCell aria-label="More styles"><Svg w={7} h={7}><path d="M0 .5h7" stroke="#4a5a70" /><path d="M1 3h5L3.500 6z" fill="#4a5a70" /></Svg></ScrollCell>
                </GalleryScroll>
              </Gallery>
              <ChangeStyles><ChangeStylesIcon /><span>Change<br />Styles <Caret /></span></ChangeStyles>
            </RibbonGroup>
            <RibbonGroup name="Editing" w={75} launcher={false} $pad="2px 0 0 8px">
              <EditButton><BinocularsIcon />Find <Caret /></EditButton>
              <EditButton><ReplaceIcon />Replace</EditButton>
              <EditButton><PointerIcon />Select <Caret /></EditButton>
            </RibbonGroup>
          </Ribbon>
          <Workspace>
            <Canvas><Paper><Stray>é</Stray></Paper></Canvas>
            <ScrollBar>
              <SplitHandle />
              <ScrollButton $h={20} $line aria-label="View ruler"><Svg w={12} h={12}><path d="M.5.500h8v3h3v5h-3v3h-5v-3h-3z" fill="#f4f7fb" stroke="#66758c" /><path d="m3 3 5 5M8 4l-4 4" stroke="#8b97a8" /></Svg></ScrollButton>
              <ScrollButton $h={16} aria-label="Scroll up"><BigCaret up /></ScrollButton>
              <Track><Thumb><Svg w={9} h={8} shapeRendering="crispEdges"><path d="M0 .5h9M0 2.500h9M0 4.500h9M0 6.500h9" stroke="#64768f" /></Svg></Thumb></Track>
              <ScrollButton $h={16} $line aria-label="Scroll down"><BigCaret /></ScrollButton>
              <ScrollButton $h={17} aria-label="Previous page"><JumpIcon /></ScrollButton>
              <ScrollButton $h={17} aria-label="Browse object"><Svg w={8} h={8}><circle cx="4" cy="4" r="3.300" fill="#bccbdc" stroke="#4a5668" /></Svg></ScrollButton>
              <ScrollButton $h={17} aria-label="Next page"><JumpIcon down /></ScrollButton>
            </ScrollBar>
          </Workspace>
          <StatusBar>
            <StatusItem>Page: 1 of 1</StatusItem>
            <StatusItem>Words: 247</StatusItem>
            <StatusItem><ProofIcon /></StatusItem>
            <StatusRight>
              <Sep />
              <ViewButton $on aria-label="Print layout"><PrintViewIcon /></ViewButton>
              <ViewButton aria-label="Full screen reading"><ReadIcon /></ViewButton>
              <ViewButton aria-label="Web layout"><WebIcon /></ViewButton>
              <ViewButton aria-label="Outline"><OutlineIcon /></ViewButton>
              <ViewButton aria-label="Draft"><DraftIcon /></ViewButton>
              <ZoomLevel>100%</ZoomLevel>
              <BareButton aria-label="Zoom out"><RoundIcon /></BareButton>
              <ZoomRange type="range" aria-label="Zoom" min="0" max="100" defaultValue="50" />
              <BareButton aria-label="Zoom in"><RoundIcon plus /></BareButton>
              <Svg w={19} h={16}><g transform="translate(8 5)"><GripIcon /></g></Svg>
            </StatusRight>
          </StatusBar>
        </Client>
      </Frame>
    </Desktop>
  );
}
